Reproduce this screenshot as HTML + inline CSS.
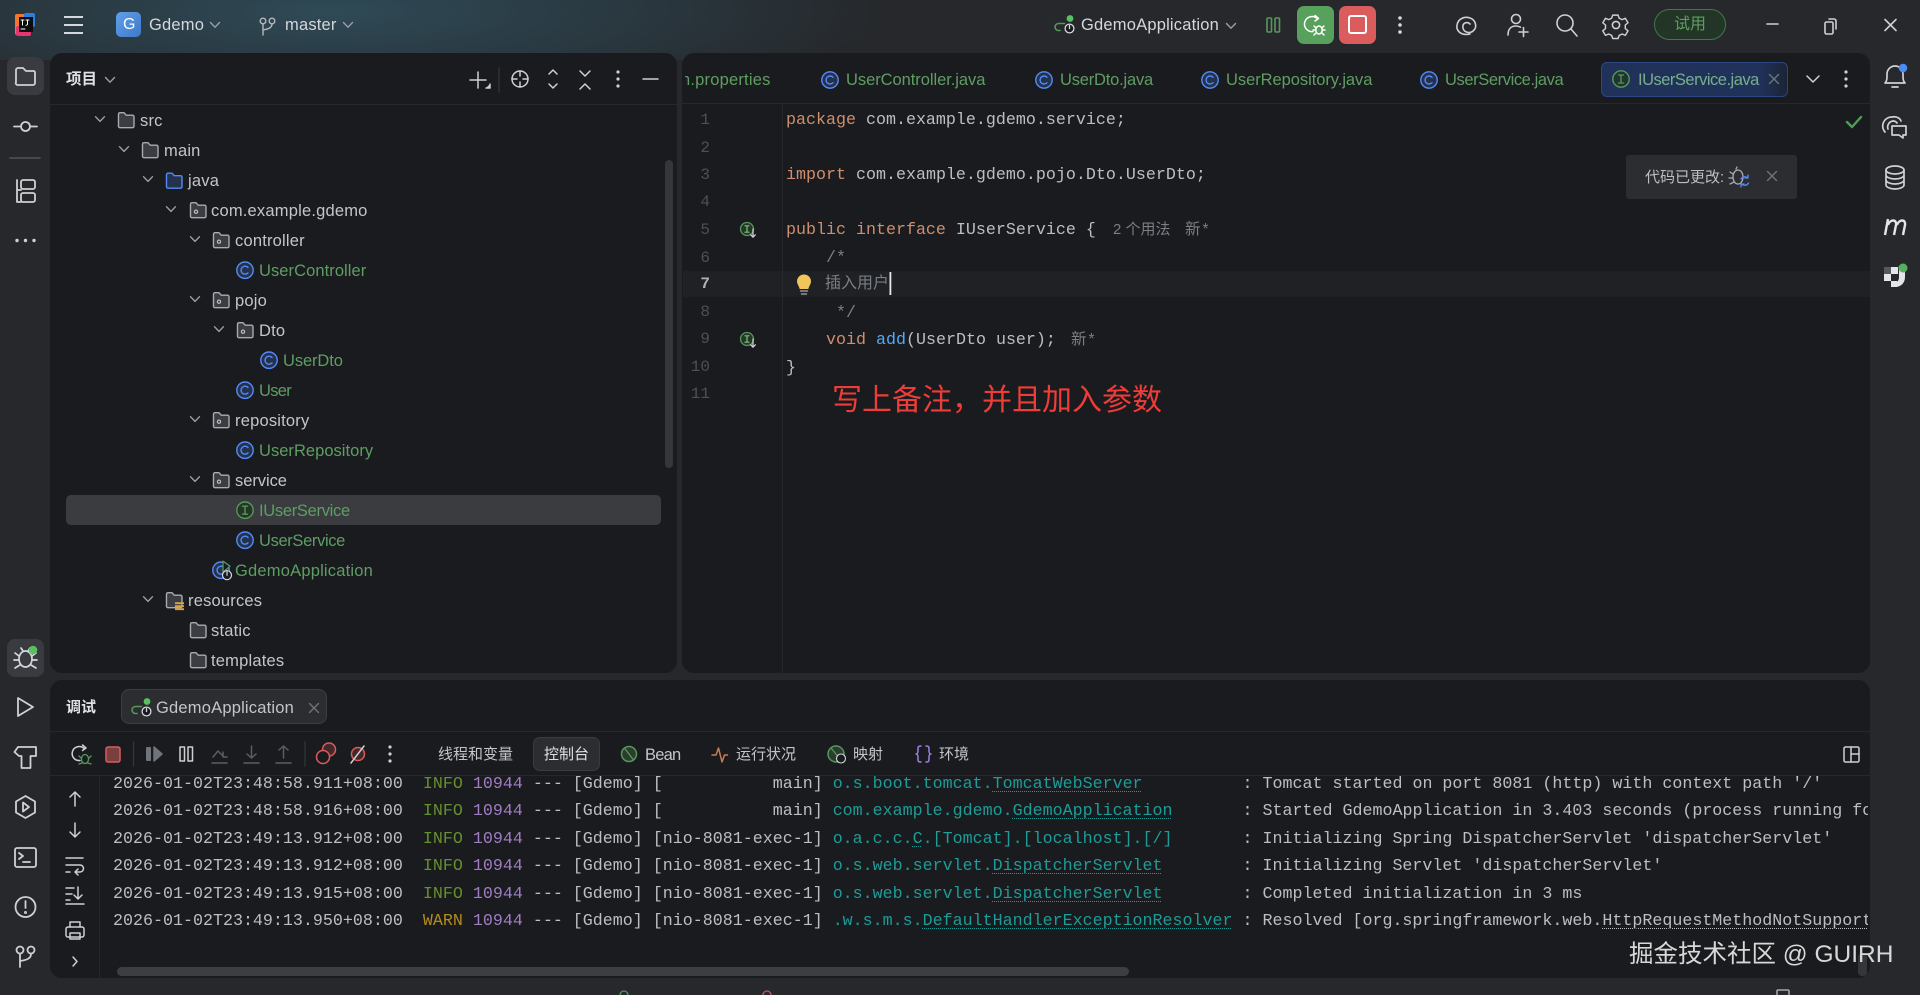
<!DOCTYPE html>
<html><head><meta charset="utf-8"><title>IDE</title>
<style>
html,body{margin:0;padding:0;width:1920px;height:995px;overflow:hidden;background:#26282b}
body{position:relative;font-family:"Liberation Sans","Noto Sans CJK SC",sans-serif}
.bg{position:absolute;left:0;top:0;width:1920px;height:60px;background:radial-gradient(ellipse 560px 110px at 330px 12px,#2f4a56 0%,#2b3e48 35%,rgba(38,40,43,0) 100%)}
.p{position:absolute;background:#191b1e;border-radius:12px}
.d{position:absolute;background:#26282b;height:1px}
.t{position:absolute;white-space:pre;line-height:20px;height:20px;font-size:16.5px;letter-spacing:.2px;color:#c3c5cb}
.g{color:#5f9e62}
.m{font-family:"Liberation Mono","Noto Sans CJK SC",monospace;font-size:16.667px;letter-spacing:0;line-height:24px;height:24px;color:#bcbec4}
.k{color:#cf8e6d}.c{color:#7a7e85}.f{color:#56a8f5}
.ln{position:absolute;width:40px;left:670px;text-align:right;font:16px/20px "Liberation Mono",monospace;color:#4b5059}
.i{font-size:15px;color:#7a7e85;letter-spacing:0;font-family:"Liberation Sans","Noto Sans CJK SC",sans-serif}
.con{position:absolute;left:113px;width:1755px;overflow:hidden;white-space:pre;font:16.667px/24px "Liberation Mono",monospace;color:#bcbec4;height:26px}
.ig{color:#668f2e}.iw{color:#b58a1e}.ip{color:#a07cc5}.l{color:#1d9c98}
.u{text-decoration:underline dotted 1px;text-underline-offset:3px}
svg{position:absolute;left:0;top:0}
</style></head><body>
<div class="bg"></div>
<div class="p" style="left:50px;top:53px;width:627px;height:620px"></div>
<div class="p" style="left:682px;top:53px;width:1188px;height:620px"></div>
<div class="p" style="left:50px;top:680px;width:1820px;height:298px"></div>
<div class="d" style="left:50px;top:104px;width:627px"></div>
<div class="d" style="left:682px;top:103px;width:1188px"></div>
<div class="d" style="left:50px;top:731px;width:1820px"></div>
<div class="d" style="left:50px;top:775px;width:1820px"></div>
<div style="position:absolute;left:782px;top:104px;width:1px;height:569px;background:#26282b"></div>
<div style="position:absolute;left:99px;top:776px;width:1px;height:202px;background:#26282b"></div>
<div style="position:absolute;left:683px;top:271px;width:1187px;height:26px;background:#1f2124"></div>
<div style="position:absolute;left:782px;top:271px;width:1px;height:26px;background:#26282b"></div>
<div style="position:absolute;left:66px;top:495px;width:595px;height:30px;background:#3a3c40;border-radius:5px"></div>
<div style="position:absolute;left:665px;top:160px;width:8px;height:308px;background:#34363a;border-radius:4px"></div>
<div style="position:absolute;left:117px;top:967px;width:1012px;height:9px;background:#3c3e42;border-radius:5px"></div>
<div style="position:absolute;left:1858px;top:953px;width:9px;height:23px;background:#34363a;border-radius:4px"></div>
<div style="position:absolute;left:7px;top:57px;width:37px;height:38px;background:#393b40;border-radius:8px"></div>
<div style="position:absolute;left:7px;top:639px;width:37px;height:38px;background:#393b40;border-radius:8px"></div>
<div style="position:absolute;left:1601px;top:62px;width:187px;height:35px;background:linear-gradient(90deg,#20325a 0%,#20325a 85%,#1b2436 100%);border:1px solid #2c4680;border-radius:6px;box-sizing:border-box"></div>
<div style="position:absolute;left:121px;top:689px;width:206px;height:35px;background:#2b2d30;border:1px solid #3c3e42;border-radius:8px;box-sizing:border-box"></div>
<div style="position:absolute;left:533px;top:737px;width:67px;height:34px;background:#2b2d30;border:1px solid #393b40;border-radius:7px;box-sizing:border-box"></div>
<div style="position:absolute;left:1626px;top:155px;width:171px;height:44px;background:#2b2d30;border-radius:3px"></div>
<div style="position:absolute;left:1297px;top:6px;width:37px;height:38px;background:#57a15c;border-radius:7px"></div>
<div style="position:absolute;left:1339px;top:6px;width:37px;height:38px;background:#db5c5c;border-radius:7px"></div>
<div style="position:absolute;left:1654px;top:9px;width:72px;height:31px;border:1.5px solid #3e7a45;background:#233526;border-radius:16px;box-sizing:border-box"></div>
<div style="position:absolute;left:116px;top:12px;width:25px;height:25px;background:linear-gradient(135deg,#5fa0ea,#3f78c8);border-radius:5px"></div>

<svg width="1920" height="995" viewBox="0 0 1920 995" fill="none" stroke-linecap="round" stroke-linejoin="round">
<defs>
<g id="fo"><path d="M1.5 15V3A1.5 1.5 0 0 1 3 1.5h4l2.2 2.5H15.5A1.5 1.5 0 0 1 17 5.5V15a1.5 1.5 0 0 1-1.5 1.5H3A1.5 1.5 0 0 1 1.5 15z" fill="#3b3d42" stroke="#a8abb2" stroke-width="1.4"/></g>
<g id="pk"><use href="#fo"/><circle cx="7" cy="10.5" r="1.6" stroke="#c3c5cb" stroke-width="1.1"/></g>
<g id="cl"><circle cx="9" cy="9" r="8.2" fill="#25324d" stroke="#548af7" stroke-width="1.4"/><path d="M12 6.3a4 4 0 1 0 0 5.4" stroke="#548af7" stroke-width="1.4"/></g>
<g id="it"><circle cx="9" cy="9" r="8.2" fill="#253627" stroke="#57965c" stroke-width="1.4"/><path d="M6.5 5h5M6.5 13h5M9 5v8" stroke="#57965c" stroke-width="1.4"/></g>
<g id="ch"><path d="M-4.5 -2.5L0 2.2L4.5 -2.5" stroke="#9da0a8" stroke-width="1.4"/></g>
<g id="xx"><path d="M-4.5 -4.5L4.5 4.5M4.5 -4.5L-4.5 4.5" stroke="#6f737a" stroke-width="1.4"/></g>
<g id="run"><path d="M5 15.5H3.5a3.5 3.5 0 0 1 0-7H9.5" stroke="#57965c" stroke-width="1.6"/><circle cx="15" cy="3.5" r="3.4" fill="#57c060"/><circle cx="14.5" cy="13.5" r="4.4" fill="#191b1e" stroke="#d5d7dc" stroke-width="1.3"/><path d="M14.5 10.5v3" stroke="#d5d7dc" stroke-width="1.3"/></g>
<g id="gut"><circle cx="8" cy="7" r="6.5" fill="#253627" stroke="#57965c" stroke-width="1.3"/><path d="M6 3.8h4M6 10.2h4M8 3.8v6.4" stroke="#7cc080" stroke-width="1.2"/><path d="M14 7v8M11.7 12.8L14 15.2l2.3-2.4" stroke="#d5d7dc" stroke-width="1.2"/></g>
</defs>

<!-- Logo -->
<rect x="15" y="14" width="13" height="21" rx="2" fill="#f2762e"/><rect x="16" y="26" width="15" height="10" rx="2" fill="#e8356f"/><rect x="24" y="13" width="11" height="14" rx="2" fill="#2a7de1"/><rect x="19" y="17" width="14" height="15" fill="#0c0d0e"/><path d="M21 20h3M22.5 20v5M26 20h3M27.5 20v4.5l-1.5 1M21 29h4" stroke="#fff" stroke-width="1"/>
<!-- Hamburger -->
<path d="M64 17h19M64 25h19M64 33h19" stroke="#d5d7dc" stroke-width="2" stroke-linecap="butt"/>
<use href="#ch" x="215" y="25"/><use href="#ch" x="348" y="25"/><use href="#ch" x="1231" y="26"/>
<g stroke="#b5b8be" stroke-width="1.4"><circle cx="263" cy="21" r="2.8"/><circle cx="272" cy="21" r="2.8"/><path d="M263 24v11M272 24c0 4-4 5-9 6"/></g>
<use href="#run" x="1055" y="15"/>
<g stroke="#57965c" stroke-width="1.6"><rect x="1267" y="18" width="4.5" height="14" rx="1"/><rect x="1275" y="18" width="4.5" height="14" rx="1"/></g>
<!-- rerun debug -->
<g stroke="#fff" stroke-width="1.5"><path d="M1317 18.500a7.500 7.500 0 1 0-4 13"/><path d="M1315 15.500l3.500 3-3.500 2.500"/><ellipse cx="1319" cy="30" rx="3.200" ry="4" fill="#57a15c"/><path d="M1314 26l2 2M1324 26l-2 2M1313 30h2M1323 30h2M1314 35l2-2M1324 35l-2-2"/></g>
<rect x="1349" y="16" width="17" height="17" rx="2" stroke="#fff" stroke-width="2"/>
<g fill="#d5d7dc"><circle cx="1400" cy="18" r="1.8"/><circle cx="1400" cy="25" r="1.8"/><circle cx="1400" cy="32" r="1.8"/></g>
<g stroke="#ced0d6" stroke-width="1.6">
<path d="M1470 34C1460 36 1456 30 1457 25C1458 19 1464 16 1470 18C1476 20 1477 27 1474 30C1471 34 1464 33 1463 28C1462 23 1467 21 1470 24"/>
<circle cx="1516" cy="19" r="4.5"/><path d="M1508 35c0-6 3-9 8-9 2 0 3 .3 4.500 1.200"/><path d="M1519 32h9M1523.500 27.500v9"/>
<circle cx="1565" cy="23" r="8"/><path d="M1571 29l6 7"/>
<path d="M1613 14h6l1.200 3.500 3.300 1.500 3.500-1.500 3 5-3 2.500v4l3 2.500-3 5-3.500-1.500-3.300 1.500L1619 40h-6l-1.200-3.500-3.300-1.500-3.500 1.500-3-5 3-2.500v-4l-3-2.500 3-5 3.500 1.500 3.300-1.500z" transform="translate(161 2.500) scale(.9)" />
<circle cx="1616" cy="25" r="3.600"/>
<path d="M1767 24h11"/>
<rect x="1825" y="22" width="8" height="12" rx="1.500"/><path d="M1829 19h5a2 2 0 0 1 2 2v8"/>
<path d="M1885 19.500l11 11M1896 19.500l-11 11"/>
</g>

<!-- Left sidebar -->
<g stroke="#ced0d6" stroke-width="1.8">
<path d="M16 82V70a2 2 0 0 1 2-2h5l3 3h8a2 2 0 0 1 1 2v10a2 2 0 0 1-2 2H18a2 2 0 0 1-2-3z"/>
<circle cx="25.500" cy="126.500" r="4.500"/><path d="M14 126.500h7M30 126.500h7"/>
<path d="M10 158h30" stroke="#4a4d52"/>
<path d="M17 180v22h4M17 190h4"/><rect x="21" y="180" width="14" height="9" rx="2"/><rect x="21" y="193" width="14" height="9" rx="2"/>
</g>
<g fill="#ced0d6"><circle cx="17" cy="240.500" r="1.700"/><circle cx="25.500" cy="240.500" r="1.700"/><circle cx="34" cy="240.500" r="1.700"/></g>
<!-- debug sidebar -->
<g stroke="#d5d7dc" stroke-width="1.700"><ellipse cx="25.500" cy="659" rx="6.500" ry="8"/><path d="M15 653l4 3M14 660h5M15 668l5-3M36 653l-4 3M37 660h-5M36 668l-5-3M21 648l2 3M30 648l-2 3"/></g>
<circle cx="33" cy="650" r="4.300" fill="#57c060"/>
<g stroke="#ced0d6" stroke-width="1.800">
<path d="M18 698l15 9-15 9z"/>
<path d="M14.500 752L18 747H36V756H30.500V768H21.500V756H19z"/>
<path d="M25.500 796l9.500 5.500v11l-9.500 5.500-9.500-5.500v-11z"/><path d="M23 802.500l6 4.500-6 4.500z"/>
<rect x="15" y="848" width="21" height="19" rx="2"/><path d="M19 853l4 3-4 3M23 862h7"/>
<circle cx="25.500" cy="907" r="10"/><path d="M25.500 901v7"/><circle cx="25.500" cy="912.500" r=".6"/>
<circle cx="20" cy="950" r="3.500"/><circle cx="31" cy="950" r="3.500"/><path d="M20 954v13M31 954c0 5-5 6-11 7"/>
</g>

<!-- Project header -->
<use href="#ch" x="110" y="80"/>
<g stroke="#ced0d6" stroke-width="1.500">
<path d="M478 72v16M470 80h16"/><path d="M490 84v4h-4" fill="#ced0d6"/>
<path d="M499 68v24" stroke="#303236"/>
<circle cx="520" cy="79" r="8"/><path d="M520 71v5M520 82v5M512 79h5M523 79h5"/>
<path d="M549 74l4-4 4 4M549 84l4 4 4-4"/>
<path d="M580 71l5 5 5-5M580 89l5-5 5 5"/>
<path d="M643 79h15"/>
</g>
<g fill="#ced0d6"><circle cx="618" cy="72" r="1.600"/><circle cx="618" cy="79" r="1.600"/><circle cx="618" cy="86" r="1.600"/></g>

<!-- Tree -->
<g transform="translate(0 -.8)">
<use href="#ch" x="100" y="120"/><use href="#fo" x="117" y="112"/>
<use href="#ch" x="124" y="150"/><use href="#fo" x="141" y="142"/>
<use href="#ch" x="148" y="180"/><path d="M166.500 196V184a1.500 1.500 0 0 1 1.500-1.500h4l2.200 2.500H180.500a1.500 1.500 0 0 1 1.500 1.500V196a1.500 1.500 0 0 1-1.500 1.500H168a1.500 1.500 0 0 1-1.500-1.500z" fill="#25324d" stroke="#548af7" stroke-width="1.400" transform="translate(0 -8.500)"/>
<use href="#ch" x="171" y="210"/><use href="#pk" x="189" y="202"/>
<use href="#ch" x="195" y="240"/><use href="#pk" x="212" y="232"/>
<use href="#cl" x="236" y="262"/>
<use href="#ch" x="195" y="300"/><use href="#pk" x="212" y="292"/>
<use href="#ch" x="219" y="330"/><use href="#pk" x="236" y="322"/>
<use href="#cl" x="260" y="352"/>
<use href="#cl" x="236" y="382"/>
<use href="#ch" x="195" y="420"/><use href="#pk" x="212" y="412"/>
<use href="#cl" x="236" y="442"/>
<use href="#ch" x="195" y="480"/><use href="#pk" x="212" y="472"/>
<use href="#it" x="236" y="502"/>
<use href="#cl" x="236" y="532"/>
<use href="#cl" x="212" y="562"/><path d="M223 562l7 5-7 6z" fill="#191b1e" stroke="#57965c" stroke-width="1.300"/><circle cx="227" cy="576" r="4.500" fill="#191b1e" stroke="#d5d7dc" stroke-width="1.200"/><path d="M227 572.500v3.500" stroke="#d5d7dc" stroke-width="1.200"/>
<use href="#ch" x="148" y="600"/><use href="#fo" x="165" y="592"/><path d="M175 604h9M175 607h9M175 610h9" stroke="#d9a343" stroke-width="1.800" stroke-linecap="butt"/>
<use href="#fo" x="189" y="622"/><use href="#fo" x="189" y="652"/>
</g>

<!-- Tabs -->
<use href="#cl" x="821" y="71"/><use href="#cl" x="1035" y="71"/><use href="#cl" x="1201" y="71"/><use href="#cl" x="1420" y="71"/>
<circle cx="1621" cy="79" r="8.200" stroke="#57965c" stroke-width="1.400" fill="#21352f"/><path d="M1618.500 75h5M1618.500 83h5M1621 75v8" stroke="#57965c" stroke-width="1.300"/>
<use href="#xx" x="1774" y="79"/>
<path d="M1807 76l6 6 6-6" stroke="#ced0d6" stroke-width="1.500"/>
<g fill="#ced0d6"><circle cx="1846" cy="72" r="1.600"/><circle cx="1846" cy="79" r="1.600"/><circle cx="1846" cy="86" r="1.600"/></g>
<path d="M1847 122l5 5 9-10" stroke="#4f9e57" stroke-width="2.400"/>
<use href="#gut" x="739" y="222"/><use href="#gut" x="739" y="332"/>
<path d="M804 275a6.500 6.500 0 0 1 6.500 6.500c0 3-2 4-2.500 7h-8c-.5-3-2.500-4-2.500-7A6.500 6.500 0 0 1 804 275z" fill="#f2c55c" stroke="#f2c55c"/><path d="M800.500 291h7M801.500 294h5" stroke="#a8abb2" stroke-width="1.300"/>
<rect x="889.500" y="272" width="1.800" height="23" fill="#e8e8e8"/>

<!-- Popup -->
<g stroke="#a8abb2" stroke-width="1.300"><ellipse cx="1738" cy="177" rx="5" ry="7"/><path d="M1730 172l3 2M1729 178h4M1730 184l4-2M1736 169l1-2"/></g>
<path d="M1741 179a4.500 4.500 0 0 1 7-1M1748.500 183a4.500 4.500 0 0 1-7 1M1748 175v3h-3M1741 187v-3h3" stroke="#548af7" stroke-width="1.300"/>
<use href="#xx" x="1772" y="176"/>

<!-- Right sidebar -->
<g stroke="#ced0d6" stroke-width="1.700">
<path d="M1885 83c2-2 2-4 2-9a8 8 0 0 1 16 0c0 5 0 7 2 9z"/><path d="M1892 87h6"/>
<path d="M1885 132a9 9 0 0 1 7-15c4-1 8 1 9 4M1888 129a6 6 0 0 1 5-8c2 0 3 .5 4 2"/><path d="M1892 126h14v9h-3v3l-4-3h-7z"/>
<ellipse cx="1895" cy="170" rx="9" ry="4"/><path d="M1886 170v15c0 2 4 4 9 4s9-2 9-4v-15M1886 175c0 2 4 4 9 4s9-2 9-4M1886 180c0 2 4 4 9 4s9-2 9-4"/>
</g>
<circle cx="1903" cy="68" r="4.300" fill="#4a8cf7"/>
<path d="M1885 235L1888 219M1888 225C1890 219 1897 219 1896 225L1894 235M1897 225C1899 219 1906 219 1905 225L1903 235" stroke="#e4e5e9" stroke-width="2.400" stroke-linecap="butt"/>
<g fill="#e4e5e9"><rect x="1884" y="274" width="7" height="7"/><rect x="1891" y="267" width="7" height="7"/><rect x="1891" y="281" width="6" height="6"/><path d="M1899 269h6v8c0 6-4 10-10 10v-5c3 0 4-2 4-5z"/></g>
<rect x="1884" y="267" width="7" height="7" fill="#55585e"/>
<circle cx="1903" cy="268" r="4.500" fill="#57b060"/>

<!-- Debug tab -->
<use href="#run" x="132" y="698"/>
<use href="#xx" x="314" y="708"/>
<!-- Debug toolbar -->
<g stroke="#ced0d6" stroke-width="1.500">
<path d="M84 748.500a7 7 0 1 0-4 12"/><path d="M82.500 745l3.500 3-3.500 2.500"/>
</g>
<g stroke="#57965c" stroke-width="1.300"><ellipse cx="85" cy="759" rx="3.500" ry="4.500"/><path d="M79 756l2 2M91 756l-2 2M79 764l3-1M91 764l-3-1"/></g>
<rect x="106" y="747" width="14" height="15" rx="2" fill="#7a3f3f" stroke="#db5c5c" stroke-width="1.500"/>
<path d="M133.500 742v24M305 742v24" stroke="#35373b" stroke-width="1.200"/>
<rect x="146" y="747" width="5" height="14" rx="1" fill="#6f737a"/><path d="M154 747l8 7-8 7z" fill="#6f737a" stroke="#6f737a" stroke-width="1.500"/>
<path d="M180 747v14h4.500v-14zM188 747v14h4.500v-14z" stroke="#ced0d6" stroke-width="1.500"/>
<g stroke="#5a5d63" stroke-width="1.500"><path d="M212 763h15M213 757l5-6 5 5M223 752v5h4"/>
<path d="M244 763h15M251.500 746v12M247 754l4.500 4 4.500-4"/><path d="M276 763h15M283.500 758v-12M279 750l4.500-4 4.500 4"/></g>
<g stroke="#db5c5c" stroke-width="1.500"><circle cx="329" cy="749.500" r="6.500" fill="#43292b"/><circle cx="323" cy="757" r="6.500" fill="#191b1e"/></g>
<circle cx="358" cy="754" r="6.500" fill="#43292b" stroke="#db5c5c" stroke-width="1.500"/><path d="M351 763l13-17" stroke="#ced0d6" stroke-width="1.500"/>
<g fill="#ced0d6"><circle cx="390" cy="747" r="1.600"/><circle cx="390" cy="754" r="1.600"/><circle cx="390" cy="761" r="1.600"/></g>
<circle cx="629" cy="754" r="7.500" fill="#2b3d2c" stroke="#57965c" stroke-width="1.500"/><path d="M624.500 748l9 12" stroke="#57965c" stroke-width="1.400"/>
<path d="M712 755h4l2.500-7 3.500 14 2.500-7h3" stroke="#c77d55" stroke-width="1.500"/>
<circle cx="836" cy="754" r="8" fill="#2b3d2c" stroke="#57965c" stroke-width="1.500"/><path d="M831 748l9 11" stroke="#57965c" stroke-width="1.300"/><circle cx="841" cy="758.500" r="4.500" fill="#191b1e" stroke="#d5d7dc" stroke-width="1.100"/>
<path d="M921 746c-3 0-3 1-3 3v2c0 2-1 3-2 3 1 0 2 1 2 3v2c0 2 0 3 3 3M926 746c3 0 3 1 3 3v2c0 2 1 3 2 3-1 0-2 1-2 3v2c0 2 0 3-3 3" stroke="#9f7fe0" stroke-width="1.500"/>
<rect x="1844" y="747" width="15" height="15" rx="1.500" stroke="#ced0d6" stroke-width="1.500"/><path d="M1851 747v15M1851 754h8" stroke="#ced0d6" stroke-width="1.500"/>
<!-- console gutter -->
<g stroke="#ced0d6" stroke-width="1.500">
<path d="M75 806v-14M70 797l5-5 5 5"/>
<path d="M75 823v14M70 832l5 5 5-5"/>
<path d="M66 858h17M66 865h14a3 3 0 0 1 0 7h-5M78 869l-3 3 3 3M66 872h4"/>
<path d="M66 888h8M66 894h6M66 900h4M66 904h18M78 887v12M74 895l4 4 4-4"/>
<rect x="66" y="927" width="18" height="10" rx="2"/><path d="M70 927v-5h10v5M70 933h10v6H70z"/>
<path d="M73 957l4 4.500-4 4.500"/>
</g>
<!-- status bar fragments -->
<path d="M620 995a4 4 0 0 1 8 0" stroke="#57965c" stroke-width="1.300"/>
<path d="M763 995a4 4 0 0 1 8 0" stroke="#c75470" stroke-width="1.300"/>
<path d="M1777 995v-4a1 1 0 0 1 1-1h10a1 1 0 0 1 1 1v4" stroke="#bcbec4" stroke-width="1.300"/>
</svg>

<!-- Top bar text -->
<div class="t" style="left:123px;top:15px;font-size:16px;color:#fff;font-weight:400">G</div>
<div class="t" style="left:149px;top:15px;color:#d5d7dc">Gdemo</div>
<div class="t" style="left:285px;top:15px;color:#d5d7dc">master</div>
<div class="t" style="left:1081px;top:15px;color:#d5d7dc">GdemoApplication</div>
<div class="t" style="left:1674px;top:15px;font-size:16px;color:#5f9e62;letter-spacing:0">试用</div>

<!-- Project tree text -->
<div class="t" style="left:66px;top:70px;color:#dfe1e5;letter-spacing:0;font-size:15.500px;font-weight:700">项目</div>
<div class="t" style="left:140px;top:111px">src</div>
<div class="t" style="left:164px;top:141px">main</div>
<div class="t" style="left:188px;top:171px">java</div>
<div class="t" style="left:211px;top:201px">com.example.gdemo</div>
<div class="t" style="left:235px;top:231px">controller</div>
<div class="t g" style="left:259px;top:261px;letter-spacing:.07px">UserController</div>
<div class="t" style="left:235px;top:291px">pojo</div>
<div class="t" style="left:259px;top:321px">Dto</div>
<div class="t g" style="left:283px;top:351px;letter-spacing:-.1px">UserDto</div>
<div class="t g" style="left:259px;top:381px;letter-spacing:-.7px">User</div>
<div class="t" style="left:235px;top:411px">repository</div>
<div class="t g" style="left:259px;top:441px;letter-spacing:.03px">UserRepository</div>
<div class="t" style="left:235px;top:471px;letter-spacing:-.05px">service</div>
<div class="t g" style="left:259px;top:501px;letter-spacing:-.3px">IUserService</div>
<div class="t g" style="left:259px;top:531px;letter-spacing:-.35px">UserService</div>
<div class="t g" style="left:235px;top:561px">GdemoApplication</div>
<div class="t" style="left:188px;top:591px">resources</div>
<div class="t" style="left:211px;top:621px">static</div>
<div class="t" style="left:211px;top:651px">templates</div>

<!-- Tabs text -->
<div class="t g" style="left:681px;top:70px;clip-path:inset(0 0 0 4px)">n.properties</div>
<div class="t g" style="left:846px;top:70px;letter-spacing:-.05px">UserController.java</div>
<div class="t g" style="left:1060px;top:70px;letter-spacing:-.2px">UserDto.java</div>
<div class="t g" style="left:1226px;top:70px;letter-spacing:-.05px">UserRepository.java</div>
<div class="t g" style="left:1445px;top:70px;letter-spacing:-.4px">UserService.java</div>
<div class="t" style="left:1638px;top:70px;color:#76ae8c;letter-spacing:-.5px">IUserService.java</div>

<!-- Line numbers -->
<div class="ln" style="top:110px">1</div>
<div class="ln" style="top:138px">2</div>
<div class="ln" style="top:165px">3</div>
<div class="ln" style="top:192px">4</div>
<div class="ln" style="top:220px">5</div>
<div class="ln" style="top:248px">6</div>
<div class="ln" style="top:274px;color:#b0b3ba;font-weight:700">7</div>
<div class="ln" style="top:302px">8</div>
<div class="ln" style="top:329px">9</div>
<div class="ln" style="top:357px">10</div>
<div class="ln" style="top:384px">11</div>

<!-- Code -->
<div class="t m" style="left:786px;top:109px"><span class="k">package</span> com.example.gdemo.service;</div>
<div class="t m" style="left:786px;top:164px"><span class="k">import</span> com.example.gdemo.pojo.Dto.UserDto;</div>
<div class="t m" style="left:786px;top:219px"><span class="k">public interface</span> IUserService {</div>
<div class="t i" style="left:1113px;top:220px">2 个用法</div>
<div class="t i" style="left:1185px;top:220px;letter-spacing:2px;font-size:15.500px">新*</div>
<div class="t m c" style="left:826px;top:247px;color:#7a7e85">/*</div>
<div class="t" style="left:825px;top:274px;font-size:16px;letter-spacing:0;color:#7a7e85">插入用户</div>
<div class="t m c" style="left:836px;top:302px;color:#7a7e85">*/</div>
<div class="t m" style="left:826px;top:329px"><span class="k">void</span> <span class="f">add</span>(UserDto user);</div>
<div class="t i" style="left:1071px;top:330px;letter-spacing:2px;font-size:15.500px">新*</div>
<div class="t m" style="left:786px;top:357px">}</div>
<div class="t" style="left:832px;top:377px;height:40px;line-height:40px;font-size:30px;letter-spacing:0;color:#ee3c38;font-family:'Noto Sans CJK SC',sans-serif">写上备注，并且加入参数</div>

<!-- Popup text -->
<div class="t" style="left:1645px;top:168px;font-size:15px;letter-spacing:0;color:#bcbec4">代码已更改:</div>

<!-- Debug panel text -->
<div class="t" style="left:66px;top:698px;font-size:15px;letter-spacing:0;color:#dfe1e5;font-weight:700">调试</div>
<div class="t" style="left:156px;top:698px;color:#c3c5cb">GdemoApplication</div>
<div class="t" style="left:438px;top:745px;font-size:15px;letter-spacing:0">线程和变量</div>
<div class="t" style="left:544px;top:745px;font-size:15px;letter-spacing:0;color:#dfe1e5">控制台</div>
<div class="t" style="left:645px;top:745px;letter-spacing:-.8px">Bean</div>
<div class="t" style="left:736px;top:745px;font-size:15px;letter-spacing:0">运行状况</div>
<div class="t" style="left:853px;top:745px;font-size:15px;letter-spacing:0">映射</div>
<div class="t" style="left:939px;top:745px;font-size:15px;letter-spacing:0">环境</div>

<!-- Console -->
<div class="con" style="top:773px">2026-01-02T23:48:58.911+08:00  <span class="ig">INFO</span> <span class="ip">10944</span> --- [Gdemo] [           main] <span class="l">o.s.boot.tomcat.<span class="u">TomcatWebServer</span>         </span> : Tomcat started on port 8081 (http) with context path '/'</div>
<div class="con" style="top:800px">2026-01-02T23:48:58.916+08:00  <span class="ig">INFO</span> <span class="ip">10944</span> --- [Gdemo] [           main] <span class="l">com.example.gdemo.<span class="u">GdemoApplication</span>      </span> : Started GdemoApplication in 3.403 seconds (process running for 3.912)</div>
<div class="con" style="top:828px">2026-01-02T23:49:13.912+08:00  <span class="ig">INFO</span> <span class="ip">10944</span> --- [Gdemo] [nio-8081-exec-1] <span class="l">o.a.c.c.<span class="u">C</span>.[Tomcat].[localhost].[/]      </span> : Initializing Spring DispatcherServlet 'dispatcherServlet'</div>
<div class="con" style="top:855px">2026-01-02T23:49:13.912+08:00  <span class="ig">INFO</span> <span class="ip">10944</span> --- [Gdemo] [nio-8081-exec-1] <span class="l">o.s.web.servlet.<span class="u">DispatcherServlet</span>       </span> : Initializing Servlet 'dispatcherServlet'</div>
<div class="con" style="top:883px">2026-01-02T23:49:13.915+08:00  <span class="ig">INFO</span> <span class="ip">10944</span> --- [Gdemo] [nio-8081-exec-1] <span class="l">o.s.web.servlet.<span class="u">DispatcherServlet</span>       </span> : Completed initialization in 3 ms</div>
<div class="con" style="top:910px">2026-01-02T23:49:13.950+08:00  <span class="iw">WARN</span> <span class="ip">10944</span> --- [Gdemo] [nio-8081-exec-1] <span class="l">.w.s.m.s.<span class="u">DefaultHandlerExceptionResolver</span></span> : Resolved [org.springframework.web.<span class="u">HttpRequestMethodNotSupportedException</span>: Request method 'GET' is not supported]</div>

<!-- Watermark -->
<div class="t" style="left:1629px;top:937px;height:36px;line-height:36px;font-size:24.500px;letter-spacing:0;color:#d8d8d8;font-family:'Liberation Sans','Noto Sans CJK SC',sans-serif">掘金技术社区 @ GUIRH</div>
</body></html>
